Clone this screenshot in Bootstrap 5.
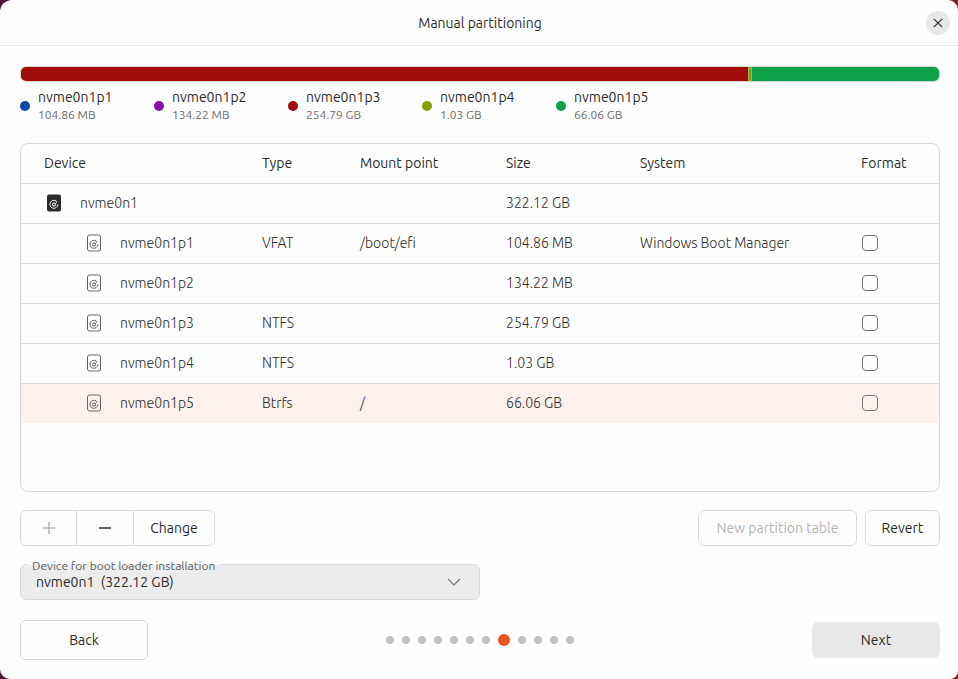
<!DOCTYPE html>
<html lang="en">
<head>
<meta charset="utf-8">
<meta name="viewport" content="width=device-width, initial-scale=1">
<title>Manual partitioning</title>
<link href="https://cdn.jsdelivr.net/npm/bootstrap@5.3.0/dist/css/bootstrap.min.css" rel="stylesheet">
<style>
  :root { --line: #dadada; --ink: #2b2b2b; --soft: #6b6b6b; --faint: #b4b4b4; --sheet: #fefefe; }
  body { font-family: Ubuntu, "Noto Sans", sans-serif; font-size: 14px; line-height: 20px; color: var(--ink);
         background: linear-gradient(90deg, #4b1638, #5e1b33 60%, #7c2029); }
  .installer { background: var(--sheet); border-radius: 12px 10px 8px 10px; }
  .titlebar { height: 46px; border-bottom: 1px solid #e3e3e3; padding: 0 8px 0 34px; }
  .titlebar h1 { font-size: 14px; line-height: 20px; }
  .close-btn { width: 24px; height: 24px; border-radius: 50%; background: #e8e8e8; color: var(--ink); }
  .page-body { padding: 20px 18px 19px 20px; }
  .usage { height: 16px; border: 1px solid #d6d6d6; border-radius: 6px; background: var(--sheet); }
  .c1 { background: #0f47a8; } .c2 { background: #870fa8; } .c3 { background: #a10d0d; }
  .c4 { background: #87a10d; } .c5 { background: #0da14a; }
  .usage .c4 { min-width: 4px; border: solid #9fae4e; border-width: 0 1px; }
  .legend-list { gap: 40px; margin: 5px 0 18px; }
  .legend-list li { width: 94px; gap: 8px; }
  .swatch { width: 10px; height: 10px; border-radius: 50%; }
  .pname { display: block; line-height: 20px; }
  .cap { display: block; font-size: 12px; line-height: 16px; padding-bottom: 2px; color: var(--soft); }
  .panel { border: 1px solid var(--line); border-radius: 8px; overflow: hidden; }
  .parts { table-layout: fixed; border-collapse: separate; border-spacing: 0; }
  .parts tr > * { height: 40px; padding: 0 0 1px; font-weight: 300; border-bottom: 1px solid var(--line); }
  .parts thead tr > * { font-weight: 400; }
  .parts tbody tr:last-child > * { border-bottom: 0; height: 39px; background: #fdf1ed; }
  .c-type { width: 98px; } .c-mount { width: 146px; } .c-size { width: 134px; } .c-sys { width: 221px; } .c-fmt { width: 78px; }
  .parts tr > .dev { padding-left: 23px; }
  .disk-row { padding-left: 22px; gap: 15px; }
  .disk-row.kid { padding-left: 62px; }
  .kid svg { color: #666; }
  .parts .form-check-input { width: 16px; height: 16px; margin: 0 0 0 1px; border: 1px solid #777; border-radius: 4px; background-color: transparent; display: block; }
  .tool { --bs-btn-font-size: 14px; --bs-btn-line-height: 20px; --bs-btn-padding-x: 15px; --bs-btn-padding-y: 7px;
          --bs-btn-border-radius: 6px; --bs-btn-border-color: var(--line); --bs-btn-color: var(--ink);
          --bs-btn-disabled-border-color: var(--line); --bs-btn-disabled-color: var(--faint); --bs-btn-disabled-opacity: 1;
          --bs-btn-hover-border-color: var(--line); --bs-btn-hover-bg: #f2f2f2; --bs-btn-hover-color: var(--ink); }
  .tool.glyph { width: 58px; padding-left: 0; padding-right: 0; }
  .tool.glyph:first-child { width: 57px; }
  .tool.glyph svg { display: block; margin: 0 auto; }
  .tool.edit { width: 82px; }
  .tool.wide { min-width: 159px; }
  .tool.short { min-width: 75px; }
  .tool.step { width: 128px; }
  .tool.back { --bs-btn-padding-y: 9px; }
  .tool.next { --bs-btn-bg: #e8e8e8; --bs-btn-border-color: #e8e8e8; }
  .stack { gap: 18px; }
  .boot { width: 50%; }
  .boot select { height: 36px; border: 1px solid var(--line); border-radius: 6px; background: #ececec; color: var(--ink);
                 padding: 0 40px 0 15px; font-size: 14px; line-height: 20px; appearance: none; }
  .boot label { left: 8px; top: -6px; padding: 0 4px; font-size: 12px; line-height: 16px; color: #5e5e5e;
                background: linear-gradient(var(--sheet) 7px, #ececec 7px); }
  .boot svg { right: 19px; top: 11px; color: #777; pointer-events: none; }
  .steps { gap: 8px; }
  .steps li { width: 8px; height: 8px; border-radius: 50%; background: #bfbfbf; }
  .steps .now { width: 12px; height: 12px; background: #e95420; }
  .foot { margin-top: 2px; }
</style>
</head>
<body>
<svg class="d-none" aria-hidden="true">
  <symbol id="swirl" viewBox="0 0 14 18">
    <path d="M10.300 8.200A4 4 0 1 0 10.900 10.500" fill="none" stroke="currentColor"/>
    <circle cx="7" cy="10.500" r="1.600" fill="none" stroke="currentColor"/>
    <path d="M7.600 10.200 9.600 9" stroke="currentColor"/>
  </symbol>
  <symbol id="part" viewBox="0 0 14 18">
    <rect x=".5" y="1" width="13" height="16" rx="2" fill="none" stroke="currentColor"/>
    <use href="#swirl"/>
  </symbol>
  <symbol id="disk" viewBox="0 0 14 18">
    <rect y=".5" width="14" height="17" rx="2" fill="#2b2b2b"/>
    <use href="#swirl"/>
  </symbol>
</svg>
<main class="installer min-vh-100 d-flex flex-column">
  <header class="titlebar d-flex align-items-center">
    <h1 class="flex-grow-1 text-center fw-normal m-0">Manual partitioning</h1>
    <button type="button" class="close-btn btn p-0 border-0 d-flex align-items-center justify-content-center" aria-label="Close">
      <svg width="10" height="10" viewBox="0 0 10 10" stroke="currentColor" stroke-width="1.200"><path d="M.8.8 9.200 9.200M9.200.8.8 9.200"/></svg>
    </button>
  </header>

  <div class="page-body flex-grow-1 d-flex flex-column">
    <div class="usage d-flex overflow-hidden" role="img" aria-label="Disk usage by partition">
      <div class="c3" style="width:79.2%"></div>
      <div class="c4" style="width:.32%"></div>
      <div class="c5 flex-grow-1"></div>
    </div>
    <ul class="legend-list list-unstyled d-flex">
      <li class="d-flex align-items-center"><span class="swatch c1"></span><span><span class="pname">nvme0n1p1</span><span class="cap">104.86 MB</span></span></li>
      <li class="d-flex align-items-center"><span class="swatch c2"></span><span><span class="pname">nvme0n1p2</span><span class="cap">134.22 MB</span></span></li>
      <li class="d-flex align-items-center"><span class="swatch c3"></span><span><span class="pname">nvme0n1p3</span><span class="cap">254.79 GB</span></span></li>
      <li class="d-flex align-items-center"><span class="swatch c4"></span><span><span class="pname">nvme0n1p4</span><span class="cap">1.03 GB</span></span></li>
      <li class="d-flex align-items-center"><span class="swatch c5"></span><span><span class="pname">nvme0n1p5</span><span class="cap">66.06 GB</span></span></li>
    </ul>

    <div class="stack flex-grow-1 d-flex flex-column">
      <div class="panel flex-grow-1">
        <table class="parts w-100 align-middle">
          <thead>
            <tr><th scope="col" class="dev">Device</th><th scope="col" class="c-type">Type</th><th scope="col" class="c-mount">Mount point</th><th scope="col" class="c-size">Size</th><th scope="col" class="c-sys">System</th><th scope="col" class="c-fmt">Format</th></tr>
          </thead>
          <tbody>
            <tr><td><div class="disk-row d-flex align-items-center"><svg class="text-white mx-1" width="14" height="18" aria-hidden="true"><use href="#disk"/></svg>nvme0n1</div></td><td></td><td></td><td>322.12 GB</td><td></td><td></td></tr>
            <tr><td><div class="disk-row kid d-flex align-items-center"><svg class="mx-1" width="14" height="18" aria-hidden="true"><use href="#part"/></svg>nvme0n1p1</div></td><td>VFAT</td><td>/boot/efi</td><td>104.86 MB</td><td>Windows Boot Manager</td><td><input class="form-check-input" type="checkbox" aria-label="Format nvme0n1p1"></td></tr>
            <tr><td><div class="disk-row kid d-flex align-items-center"><svg class="mx-1" width="14" height="18" aria-hidden="true"><use href="#part"/></svg>nvme0n1p2</div></td><td></td><td></td><td>134.22 MB</td><td></td><td><input class="form-check-input" type="checkbox" aria-label="Format nvme0n1p2"></td></tr>
            <tr><td><div class="disk-row kid d-flex align-items-center"><svg class="mx-1" width="14" height="18" aria-hidden="true"><use href="#part"/></svg>nvme0n1p3</div></td><td>NTFS</td><td></td><td>254.79 GB</td><td></td><td><input class="form-check-input" type="checkbox" aria-label="Format nvme0n1p3"></td></tr>
            <tr><td><div class="disk-row kid d-flex align-items-center"><svg class="mx-1" width="14" height="18" aria-hidden="true"><use href="#part"/></svg>nvme0n1p4</div></td><td>NTFS</td><td></td><td>1.03 GB</td><td></td><td><input class="form-check-input" type="checkbox" aria-label="Format nvme0n1p4"></td></tr>
            <tr><td><div class="disk-row kid d-flex align-items-center"><svg class="mx-1" width="14" height="18" aria-hidden="true"><use href="#part"/></svg>nvme0n1p5</div></td><td>Btrfs</td><td>/</td><td>66.06 GB</td><td></td><td><input class="form-check-input" type="checkbox" aria-label="Format nvme0n1p5"></td></tr>
          </tbody>
        </table>
      </div>

      <div class="d-flex justify-content-between">
        <div class="btn-group" role="group" aria-label="Partition actions">
          <button type="button" class="btn tool glyph" disabled aria-label="Add"><svg width="12" height="12" viewBox="0 0 12 12" stroke="currentColor" stroke-width="1.500"><path d="M6 0V12M0 6H12"/></svg></button>
          <button type="button" class="btn tool glyph" aria-label="Remove"><svg width="12" height="12" viewBox="0 0 12 12" stroke="currentColor" stroke-width="1.500"><path d="M0 6H12"/></svg></button>
          <button type="button" class="btn tool edit">Change</button>
        </div>
        <div class="d-flex gap-2">
          <button type="button" class="btn tool wide" disabled>New partition table</button>
          <button type="button" class="btn tool short">Revert</button>
        </div>
      </div>

      <div class="boot position-relative">
        <select class="w-100 d-block" id="bootdev"><option>nvme0n1&nbsp; (322.12 GB)</option></select>
        <label class="position-absolute" for="bootdev">Device for boot loader installation</label>
        <svg class="position-absolute" width="14" height="14" viewBox="0 0 14 14" fill="none" stroke="currentColor" stroke-width="1.200" aria-hidden="true"><path d="M1 4 7 10 13 4"/></svg>
      </div>

      <div class="foot d-flex justify-content-between align-items-center">
        <button type="button" class="btn tool step back">Back</button>
        <ol class="steps list-unstyled d-flex align-items-center m-0" aria-label="Progress">
          <li></li><li></li><li></li><li></li><li></li><li></li><li></li><li class="now" aria-current="step"></li><li></li><li></li><li></li><li></li>
        </ol>
        <button type="button" class="btn tool step next">Next</button>
      </div>
    </div>
  </div>
</main>
<script src="https://cdn.jsdelivr.net/npm/bootstrap@5.3.0/dist/js/bootstrap.bundle.min.js"></script>
</body>
</html>
